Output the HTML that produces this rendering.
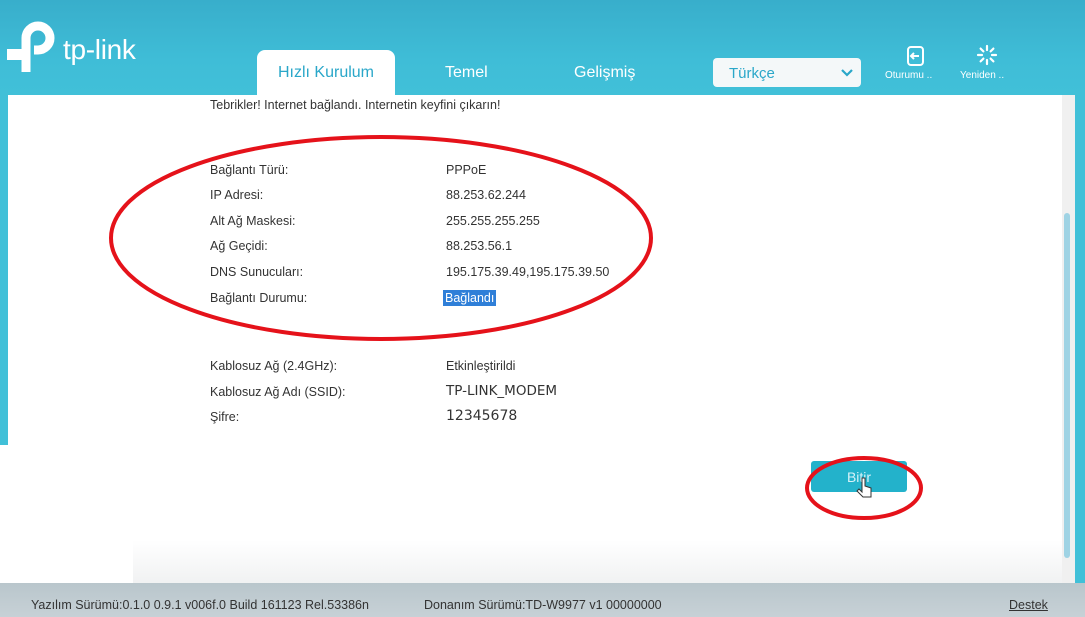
<!DOCTYPE html>
<html><head><meta charset="utf-8"><style>
*{margin:0;padding:0;box-sizing:border-box}
body{width:1085px;height:617px;overflow:hidden;position:relative;font-family:"Liberation Sans",sans-serif;background:linear-gradient(#38aecb 0,#3fbdd7 60px,#41c0d8 95px);}
.panel{position:absolute;left:8px;top:95px;width:1067px;height:490px;background:#fff}
.fade{position:absolute;left:8px;top:540px;width:1067px;height:45px;background:linear-gradient(#fff,#f0f1f2)}
.sb{position:absolute;left:1062px;top:95px;width:13px;height:490px;background:#f0f0f0}
.thumb{position:absolute;left:1064px;top:213px;width:6px;height:345px;background:#9fd3e4;border-radius:3px}
.footer{position:absolute;left:0;top:583px;width:1085px;height:34px;background:linear-gradient(#b9c6cc,#c7d1d6);font-size:12.5px;color:#333}
.footer span{position:absolute;top:15px}
.tab{position:absolute;top:50px;left:257px;width:138px;height:46px;background:#fff;border-radius:8px 8px 0 0;color:#2aa7c9;font-size:16px;text-align:center;padding-top:14px}
.nav{position:absolute;top:64px;color:#fff;font-size:16px}
.sel{position:absolute;left:713px;top:58px;width:148px;height:29px;background:#f4f8f9;border-radius:4px;color:#2aa7c9;font-size:15px;padding:7px 0 0 16px}
.sel svg{position:absolute;right:8px;top:11px}
.ic{position:absolute;color:#fff;font-size:10px}
.t{position:absolute;font-size:12.5px;color:#333}
.v{position:absolute;font-size:12.5px;color:#333}
.btn{position:absolute;left:811px;top:461px;width:96px;height:31px;background:#23b2cb;border-radius:3px;color:#d8f2f8;font-size:14px;text-align:center;padding-top:8px}
</style></head><body>
<svg style="position:absolute;left:0;top:0" width="60" height="80" viewBox="0 0 60 80">
<path d="M26 72 V38 A12 12 0 1 1 38 50 H34" fill="none" stroke="#fff" stroke-width="9"/>
<rect x="7" y="49" width="21" height="11" fill="#fff"/>
</svg>
<div style="position:absolute;left:63px;top:34px;color:#fff;font-size:28px;letter-spacing:-0.3px">tp-link</div>
<div class="tab">Hızlı Kurulum</div>
<div class="nav" style="left:445px">Temel</div>
<div class="nav" style="left:574px">Gelişmiş</div>
<div class="sel">Türkçe<svg width="12" height="8" viewBox="0 0 12 8"><path d="M1 1 L6 6 L11 1" stroke="#2aa7c9" stroke-width="2.2" fill="none"/></svg></div>
<svg style="position:absolute;left:904px;top:45px" width="22" height="22" viewBox="0 0 22 22"><rect x="4" y="2" width="15" height="18" rx="3" fill="none" stroke="#fff" stroke-width="2"/><path d="M15 11 H7 M10 8 L7 11 L10 14" stroke="#fff" stroke-width="2" fill="none"/></svg>
<div class="ic" style="left:885px;top:70px">Oturumu ..</div>
<svg style="position:absolute;left:976px;top:44px" width="22" height="22" viewBox="0 0 22 22" stroke="#fff" stroke-width="2.2" stroke-linecap="round"><path d="M11 2v4M11 16v4M2 11h4M16 11h4M4.6 4.6l2.8 2.8M14.6 14.6l2.8 2.8M4.6 17.4l2.8-2.8M14.6 7.4l2.8-2.8"/></svg>
<div class="ic" style="left:960px;top:70px">Yeniden ..</div>
<div class="panel"></div>
<div class="fade"></div>
<div class="sb"></div><div class="thumb"></div>
<div style="position:absolute;left:0;top:445px;width:133px;height:140px;background:#fff"></div>
<div class="t" style="left:210px;top:98px">Tebrikler! Internet bağlandı. Internetin keyfini çıkarın!</div>
<div class="t" style="left:210px;top:163px">Bağlantı Türü:</div><div class="v" style="left:446px;top:163px">PPPoE</div>
<div class="t" style="left:210px;top:188px">IP Adresi:</div><div class="v" style="left:446px;top:188px">88.253.62.244</div>
<div class="t" style="left:210px;top:214px">Alt Ağ Maskesi:</div><div class="v" style="left:446px;top:214px">255.255.255.255</div>
<div class="t" style="left:210px;top:239px">Ağ Geçidi:</div><div class="v" style="left:446px;top:239px">88.253.56.1</div>
<div class="t" style="left:210px;top:265px">DNS Sunucuları:</div><div class="v" style="left:446px;top:265px">195.175.39.49,195.175.39.50</div>
<div class="t" style="left:210px;top:291px">Bağlantı Durumu:</div><div class="v" style="left:443px;top:290px;background:#2f7fd8;color:#fff;padding:1px 2px">Bağlandı</div>
<div class="t" style="left:210px;top:359px">Kablosuz Ağ (2.4GHz):</div><div class="v" style="left:446px;top:359px">Etkinleştirildi</div>
<div class="t" style="left:210px;top:385px">Kablosuz Ağ Adı (SSID):</div><div class="v" style="left:446px;top:383px;font-family:'DejaVu Sans',sans-serif;font-size:13.5px">TP-LINK_MODEM</div>
<div class="t" style="left:210px;top:410px">Şifre:</div><div class="v" style="left:446px;top:408px;font-family:'DejaVu Sans',sans-serif;font-size:14px">12345678</div>
<div class="btn">Bitir</div>
<svg style="position:absolute;left:0;top:0" width="1085" height="617">
<ellipse cx="381" cy="238" rx="270" ry="101" fill="none" stroke="#e5121a" stroke-width="4"/>
<ellipse cx="864" cy="488" rx="57" ry="30" fill="none" stroke="#e5121a" stroke-width="4"/>
<path d="M862 478 v14 l-3-3 -2 2 6 6 h8 v-9 l-6-2 v-8z" fill="#fff" stroke="#333" stroke-width="1"/>
</svg>
<div class="footer"><span style="left:31px">Yazılım Sürümü:0.1.0 0.9.1 v006f.0 Build 161123 Rel.53386n</span><span style="left:424px">Donanım Sürümü:TD-W9977 v1 00000000</span><span style="left:1009px;text-decoration:underline">Destek</span></div>
</body></html>
